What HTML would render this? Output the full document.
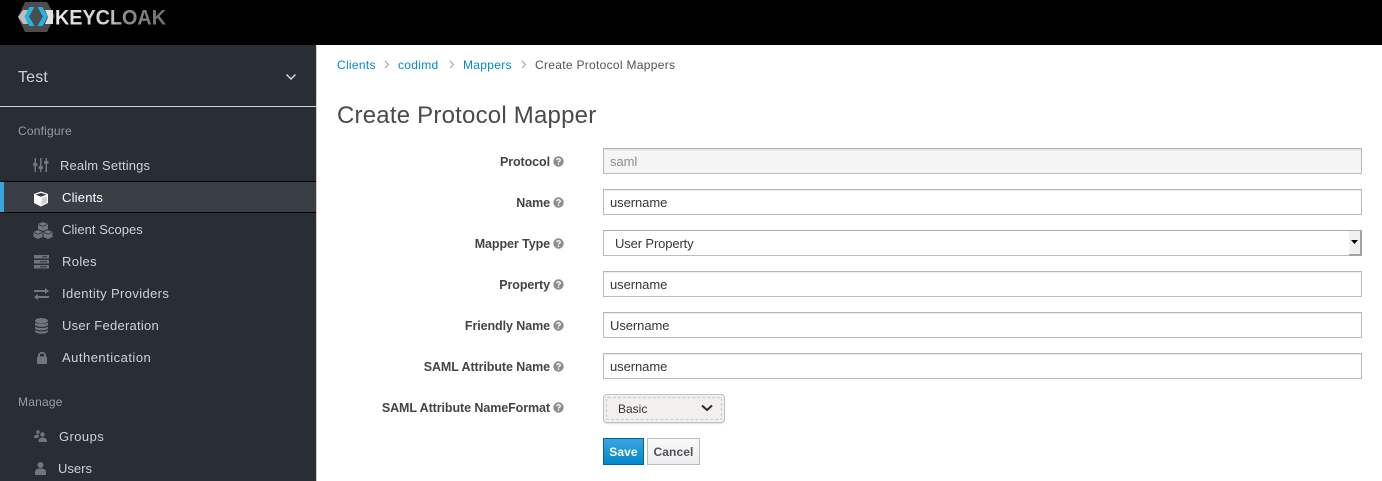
<!DOCTYPE html>
<html><head><meta charset="utf-8"><title>Create Protocol Mapper</title>
<style>
html,body{margin:0;padding:0;background:#fff}
body{width:1382px;height:481px;overflow:hidden;position:relative;font-family:"Liberation Sans",sans-serif;font-size:13px;color:#363636;letter-spacing:.3px}
.a{position:absolute;white-space:nowrap}
.hdr{left:0;top:0;width:1382px;height:45px;background:#000}
.side{left:0;top:45px;width:316px;height:436px;background:#292e34;border-right:1px solid #d1d1d1}
.nav{left:0;height:20px;line-height:20px;color:#d1d1d1}
.sec{left:18px;height:20px;line-height:20px;color:#9c9c9c;font-size:12px;letter-spacing:.2px}
.bc{top:56px;height:18px;line-height:18px;font-size:12px;letter-spacing:.3px}
.bc.l{color:#0088ce}
.lab{right:832px;height:18px;line-height:18px;font-weight:bold;font-size:12.5px;color:#444;letter-spacing:-.08px}
.q{width:11px;height:11px}
input{position:absolute;left:603px;width:759px;height:26px;box-sizing:border-box;border:1px solid #bbb;border-top-color:#b5b5b5;padding:0 6px;margin:0;font:13px "Liberation Sans",sans-serif;letter-spacing:-.07px;color:#363636;background:#fff;outline:0;box-shadow:inset 0 1px 1px rgba(3,3,3,.075)}
</style></head><body>
<div class="a hdr"></div>
<svg class="a" style="left:17px;top:1px" width="152" height="34" viewBox="0 0 152 34">
<defs><linearGradient id="g" x1="0" x2="1" y1="0" y2="0"><stop offset="0" stop-color="#e8e8e8"/><stop offset=".48" stop-color="#d0d0d0"/><stop offset=".62" stop-color="#8e8e8e"/><stop offset="1" stop-color="#6e6e6e"/></linearGradient></defs>
<path d="M8 1H30L38 15L30 31H8L1 16Z" fill="#4d4d4d"/>
<path d="M1 16L6 9H11L8 16L11 23H6Z" fill="#bdbdbd"/>
<path d="M28 9H36V23H28L31 16Z" fill="#e0e0e0"/>
<path d="M12.500 6H17.500L12 15.500L17.500 25H12.500L7.500 15.500Z" fill="#1fb6e6"/>
<path d="M25.500 6H20.500L26 15.500L20.500 25H25.500L30.500 15.500Z" fill="#1fb6e6"/>
<text x="38" y="23.500" font-family="Liberation Sans" font-weight="bold" font-size="21" fill="url(#g)" textLength="111" lengthAdjust="spacingAndGlyphs" style="letter-spacing:0">KEYCLOAK</text>
</svg>

<div class="a side"></div>
<div class="a" style="left:18px;top:67px;height:22px;line-height:22px;font-size:16px;color:#d1d1d1;letter-spacing:.15px">Test</div>
<svg class="a" style="left:285px;top:72px" width="12" height="10" viewBox="0 0 12 10"><path d="M1.500 2.500L6 7L10.500 2.500" fill="none" stroke="#e0e0e0" stroke-width="1.400"/></svg>
<div class="a" style="left:0;top:106px;width:316px;height:1px;background:#d1d1d1"></div>

<div class="a sec" style="top:121px">Configure</div>
<div class="a" style="left:0;top:181px;width:316px;height:32px;box-sizing:border-box;background:#393f44;border-top:1px solid #030303;border-bottom:1px solid #030303"></div>
<div class="a" style="left:0;top:182px;width:4px;height:30px;background:#39a5dc"></div>

<svg class="a" style="left:33px;top:157px" width="16" height="16" viewBox="0 0 16 16" fill="#72767b"><rect x="1.500" y="1" width="1.500" height="14"/><rect x="7" y="1" width="1.500" height="14"/><rect x="12.500" y="1" width="1.500" height="14"/><rect x="0" y="6" width="4.500" height="3" rx="1"/><rect x="5.500" y="9" width="4.500" height="3" rx="1"/><rect x="11" y="4" width="4.500" height="3" rx="1"/></svg>
<div class="a nav" style="left:60px;top:156px;letter-spacing:.14px">Realm Settings</div>

<svg class="a" style="left:33px;top:191px" width="16" height="16" viewBox="0 0 16 16"><path d="M8 .5L15 3V12L8 15.500L1 12V3Z" fill="#fff"/><path d="M2.500 3.800L8 5.800L13.500 3.800L8 1.900Z" fill="#393f44"/><path d="M8.600 7V14L13.800 11.500V5.200Z" fill="#cfcfcf"/></svg>
<div class="a nav" style="left:62px;top:188px;color:#fff;letter-spacing:.2px">Clients</div>

<svg class="a" style="left:33px;top:222px" width="20" height="17" viewBox="0 0 20 17" fill="#72767b"><path d="M10 0L15 2V7L10 9L5 7V2Z"/><path d="M5 8L9.500 10V15L5 17L.5 15V10Z"/><path d="M15 8L19.500 10V15L15 17L10.500 15V10Z"/><path d="M5.500 2.500L10 4.300L14.500 2.500M1 10.500L5 12.300L9 10.500M11 10.500L15 12.300L19 10.500" fill="none" stroke="#292e34" stroke-width=".7"/></svg>
<div class="a nav" style="left:62px;top:220px;letter-spacing:.05px">Client Scopes</div>

<svg class="a" style="left:34px;top:255px" width="15" height="14" viewBox="0 0 15 14" fill="#72767b"><rect width="15" height="3.500"/><rect y="5" width="15" height="3.500"/><rect y="10" width="15" height="3.500"/><rect x="8" y="1.300" width="5" height="1" fill="#292e34"/><rect x="6" y="6.300" width="7" height="1" fill="#292e34"/><rect x="6" y="11.300" width="7" height="1" fill="#292e34"/></svg>
<div class="a nav" style="left:62px;top:252px;letter-spacing:.35px">Roles</div>

<svg class="a" style="left:34px;top:288px" width="15" height="12" viewBox="0 0 15 12" fill="#72767b"><path d="M0 2H11V0L15 3L11 6V4H0Z"/><path d="M15 8H4V6L0 9L4 12V10H15Z"/></svg>
<div class="a nav" style="left:62px;top:284px;letter-spacing:.38px">Identity Providers</div>

<svg class="a" style="left:35px;top:318px" width="13" height="16" viewBox="0 0 13 16" fill="#72767b"><ellipse cx="6.500" cy="2.800" rx="6.500" ry="2.800"/><path d="M0 4.500C2 6.500 11 6.500 13 4.500V7C11 9.500 2 9.500 0 7Z"/><path d="M0 8.500C2 10.500 11 10.500 13 8.500V10.500C11 13 2 13 0 10.500Z"/><path d="M0 12C2 14 11 14 13 12V13.500C11 16.500 2 16.500 0 13.500Z"/></svg>
<div class="a nav" style="left:62px;top:316px;letter-spacing:.25px">User Federation</div>

<svg class="a" style="left:36px;top:351px" width="12" height="13" viewBox="0 0 12 13"><path d="M3 6V4C3 1 9 1 9 4V6" fill="none" stroke="#72767b" stroke-width="1.800"/><rect x="1" y="5.500" width="10" height="7.500" rx="1" fill="#72767b"/></svg>
<div class="a nav" style="left:62px;top:348px;letter-spacing:.49px">Authentication</div>

<div class="a sec" style="top:392px">Manage</div>

<svg class="a" style="left:34px;top:430px" width="13" height="12" viewBox="0 0 13 12" fill="#72767b"><circle cx="4" cy="2" r="1.800"/><path d="M0 8C0 5 2 4.500 4 4.500L5 5.500L4 8Z"/><circle cx="8.500" cy="4.500" r="2.200"/><path d="M4.500 12C4.500 8.500 6 7.500 8.500 7.500S13 8.500 13 12Z"/></svg>
<div class="a nav" style="left:59px;top:427px;letter-spacing:.42px">Groups</div>

<svg class="a" style="left:34px;top:462px" width="13" height="13" viewBox="0 0 13 13" fill="#72767b"><circle cx="6.500" cy="3" r="3"/><path d="M1 13V10C1 7.500 3 6.500 6.500 6.500S12 7.500 12 10V13Z"/></svg>
<div class="a nav" style="left:58px;top:459px;letter-spacing:0">Users</div>

<div class="a bc l" style="left:337px">Clients</div>
<svg class="a" style="left:384px;top:60px" width="6" height="9" viewBox="0 0 6 9"><path d="M1 1L4.500 4.500L1 8" fill="none" stroke="#9c9c9c"/></svg>
<div class="a bc l" style="left:398px">codimd</div>
<svg class="a" style="left:449px;top:60px" width="6" height="9" viewBox="0 0 6 9"><path d="M1 1L4.500 4.500L1 8" fill="none" stroke="#9c9c9c"/></svg>
<div class="a bc l" style="left:463px">Mappers</div>
<svg class="a" style="left:521px;top:60px" width="6" height="9" viewBox="0 0 6 9"><path d="M1 1L4.500 4.500L1 8" fill="none" stroke="#9c9c9c"/></svg>
<div class="a bc" style="left:535px;color:#4d5258">Create Protocol Mappers</div>

<h1 class="a" style="margin:0;left:337px;top:101px;height:30px;line-height:30px;font-size:24px;font-weight:normal;color:#4a4a4a;letter-spacing:.21px">Create Protocol Mapper</h1>

<svg width="0" height="0" style="position:absolute"><defs><symbol id="q" viewBox="0 0 11 11"><circle cx="5.500" cy="5.500" r="5.200" fill="#8b8d8f"/><path d="M3.800 4.300C3.800 2.300 7.300 2.300 7.300 4.200C7.300 5.400 5.500 5.300 5.500 6.500" fill="none" stroke="#fff" stroke-width="1.300"/><rect x="4.800" y="7.400" width="1.400" height="1.400" fill="#fff"/></symbol></defs></svg>

<label class="a lab" style="top:153px">Protocol</label><svg class="a q" style="left:553px;top:156px"><use href="#q"/></svg>
<input style="top:148px;background:#f5f5f5;color:#8b8d8f" value="saml" disabled>
<label class="a lab" style="top:194px">Name</label><svg class="a q" style="left:553px;top:197px"><use href="#q"/></svg>
<input style="top:189px" value="username">
<label class="a lab" style="top:235px">Mapper Type</label><svg class="a q" style="left:553px;top:238px"><use href="#q"/></svg>
<div class="a" style="left:603px;top:230px;width:759px;height:26px;box-sizing:border-box;border:1px solid #bbb;border-top-color:#aaa;background:#fff"></div>
<div class="a" style="left:615px;top:235px;height:18px;line-height:18px;letter-spacing:-.13px">User Property</div>
<div class="a" style="left:1349px;top:231px;width:13px;height:25px;box-sizing:border-box;background:#f1f1f1;border-right:2px solid #a3a3a3;border-bottom:2px solid #a3a3a3"></div>
<svg class="a" style="left:1351px;top:240px" width="7" height="5" viewBox="0 0 7 5"><path d="M0 0H7L3.500 4Z" fill="#000"/></svg>
<label class="a lab" style="top:276px">Property</label><svg class="a q" style="left:553px;top:279px"><use href="#q"/></svg>
<input style="top:271px" value="username">
<label class="a lab" style="top:317px">Friendly Name</label><svg class="a q" style="left:553px;top:320px"><use href="#q"/></svg>
<input style="top:312px" value="Username">
<label class="a lab" style="top:358px">SAML Attribute Name</label><svg class="a q" style="left:553px;top:361px"><use href="#q"/></svg>
<input style="top:353px" value="username">
<label class="a lab" style="top:399px">SAML Attribute NameFormat</label><svg class="a q" style="left:553px;top:402px"><use href="#q"/></svg>

<div class="a" style="left:603px;top:394px;width:122px;height:29px;box-sizing:border-box;border:1px solid #c4c0bb;border-radius:4px;background:#f1f0ee;box-shadow:0 1px 1px rgba(0,0,0,.12)"></div>
<div class="a" style="left:606px;top:397px;width:116px;height:23px;box-sizing:border-box;border:1px dashed #c8c8c8;border-radius:2px"></div>
<div class="a" style="left:618px;top:400px;height:18px;line-height:18px;font-size:12px;letter-spacing:0;color:#363636">Basic</div>
<svg class="a" style="left:701px;top:404px" width="12" height="8" viewBox="0 0 12 8"><path d="M1 1.500L6 6L11 1.500" fill="none" stroke="#2b2b2b" stroke-width="2"/></svg>

<div class="a" style="left:603px;top:438px;width:41px;height:27px;box-sizing:border-box;border:1px solid #00659c;background:linear-gradient(#39a5dc,#0088ce);color:#fff;font-weight:bold;text-align:center;line-height:26px;letter-spacing:.1px;font-size:12px">Save</div>
<div class="a" style="left:647px;top:438px;width:53px;height:27px;box-sizing:border-box;border:1px solid #bbb;background:linear-gradient(#fafafa,#ededed);color:#4d5258;font-weight:bold;text-align:center;line-height:26px;letter-spacing:.1px;font-size:12px">Cancel</div>
</body></html>
